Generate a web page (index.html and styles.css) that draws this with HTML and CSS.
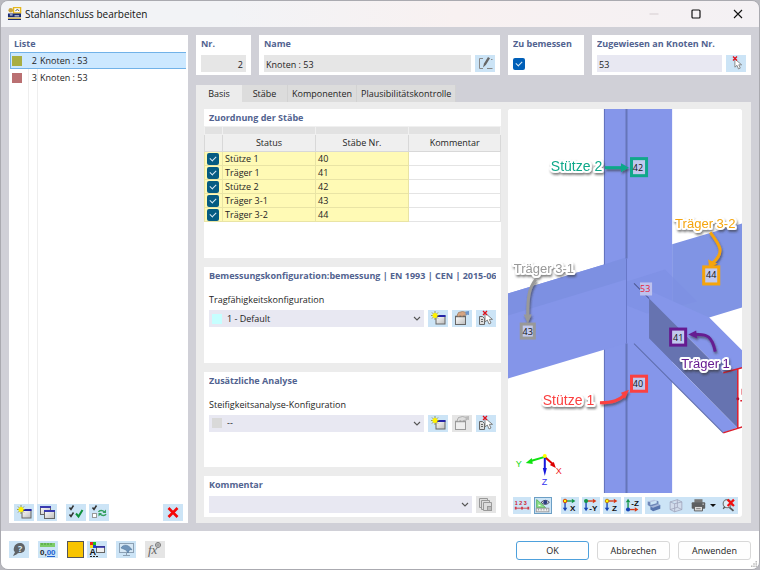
FILE: index.html
```html
<!DOCTYPE html>
<html lang="de">
<head>
<meta charset="utf-8">
<title>Stahlanschluss bearbeiten</title>
<link rel="stylesheet" href="styles.css">
</head>
<body>
<svg class="defs" aria-hidden="true">
  <defs>
    <linearGradient id="paper" x1="0" y1="0" x2="1" y2="1"><stop offset="0" stop-color="#fff"/><stop offset="1" stop-color="#bcbcbc"/></linearGradient>
    <symbol id="i-new" viewBox="0 0 20 17">
      <rect x="8" y="6" width="9" height="8" fill="url(#paper)" stroke="#666"/><path d="M7.500 6h10" stroke="#2525a8" stroke-width="2"/>
      <path d="M7 1v9M3 5.500h8M4 2.500l6 6M10 2.500l-6 6" stroke="#888a30" stroke-width=".8"/><circle cx="7" cy="5.500" r="2.500" fill="#fff200"/>
    </symbol>
    <symbol id="i-copy" viewBox="0 0 20 17">
      <rect x="3.500" y="2.500" width="10" height="8" fill="url(#paper)" stroke="#666"/><path d="M3 3h11" stroke="#3a3ab0" stroke-width="2"/>
      <rect x="7.500" y="6.500" width="10" height="8" fill="url(#paper)" stroke="#666"/><path d="M7 7h11" stroke="#3a3ab0" stroke-width="2"/>
    </symbol>
    <symbol id="i-edit" viewBox="0 0 20 17">
      <rect x="3.500" y="6.500" width="10" height="8" fill="url(#paper)" stroke="#666"/><path d="M3 6.500h11" stroke="#666" stroke-width="1.500"/>
      <path d="M5 5.500L6.500 2.500l4-1 4 1v2.500l-3 .5-1.500 1-1.500-1-2 1z" fill="#d5a583" stroke="#97755b" stroke-width=".7"/><path d="M13.500 1.500l3.500-.5v4l-3.500-.5z" fill="#6c95cb"/>
    </symbol>
    <symbol id="i-edit-off" viewBox="0 0 20 17">
      <rect x="3.500" y="6.500" width="10" height="8" fill="#eee" stroke="#999"/><path d="M3 6.500h11" stroke="#999" stroke-width="1.500"/>
      <path d="M5 5.500L6.500 2.500l4-1 4 1v2.500l-3 .5-1.500 1-1.500-1-2 1z" fill="#ddd" stroke="#999" stroke-width=".7"/><path d="M13.500 1.500l3.500-.5v4l-3.500-.5z" fill="#bbb"/>
    </symbol>
    <symbol id="cursor" viewBox="0 0 10 13"><path d="M1 1v9l2.300-2 1.700 4 2-1-1.700-3.600H8.500z" fill="#fff" stroke="#777" stroke-width=".9"/></symbol>
    <symbol id="i-delpick" viewBox="0 0 20 17">
      <path d="M3.500 6.500h3l2 2v6h-5z" fill="#ddd" stroke="#666"/><path d="M5 9.500h2M5 11.500h2" stroke="#666"/>
      <use href="#cursor" x="8" y="2" width="10" height="13"/><path d="M7 1l4 4M11 1l-4 4" stroke="#e0101c" stroke-width="1.300"/>
    </symbol>
    <symbol id="i-pick" viewBox="0 0 20 17"><use href="#cursor" x="8" y="3" width="9" height="12"/><path d="M7 1.500l4 4M11 1.500l-4 4" stroke="#e0101c" stroke-width="1.300"/></symbol>
    <symbol id="i-rename" viewBox="0 0 20 17"><path d="M8 3.500H4.500v10H8M12 13.500h5.500M16 4.500h1.500" fill="none" stroke="#888"/><path d="M8 12.500l1-4 4-6.500 2 1.200-4 6.500z" fill="#666"/></symbol>
    <symbol id="i-checks" viewBox="0 0 20 17"><path d="M3.500 3.500l1.500 2 2.500-4M3.500 10.500l1.500 2 2.500-4" fill="none" stroke="#333" stroke-width="1.500"/><path d="M10 9.500l2.500 3L16.500 6" fill="none" stroke="#10923c" stroke-width="2"/></symbol>
    <symbol id="i-invert" viewBox="0 0 20 17"><path d="M3.500 3.500l1.500 2 2.500-4" fill="none" stroke="#333" stroke-width="1.500"/><rect x="3.500" y="9.500" width="4" height="4" fill="#fff" stroke="#999"/><path d="M9.500 8c1-2 4-2 6 0M17 10c-1 2-4 2-6 0" fill="none" stroke="#35a060" stroke-width="1.500"/><path d="M17 5.500v3.500h-3.500zM9.500 12.500V9H13z" fill="#35a060"/></symbol>
    <symbol id="i-x" viewBox="0 0 20 17"><path d="M5.500 4l9 9M14.500 4l-9 9" stroke="#f50808" stroke-width="2.600"/></symbol>
    <symbol id="i-pages" viewBox="0 0 20 17"><g fill="#ddd" stroke="#999"><path d="M3.500 2.500h8v9h-8z"/><path d="M5.500 4.500h8v9h-8z"/><path d="M7.500 6.500h8v8h-8z"/></g><rect x="11.500" y="10.500" width="4" height="4" fill="#bbb" stroke="#999"/></symbol>
    <symbol id="i-help" viewBox="0 0 20 17"><path d="M11 2c3.500 0 5 2.500 5 5.500S13.500 12 11 12c-2 0-3 .5-3.500 1.500L4 15l2-4C4.500 10 4.500 8.500 5 6.500 5.800 3.500 8 2 11 2z" fill="#606468"/><text x="9" y="11" class="glyph-help">?</text></symbol>
    <symbol id="i-units" viewBox="0 0 20 17"><rect x="2" y="2" width="15" height="4" fill="#7dcc68"/><path d="M4 2v2M7 2v2M10 2v2M13 2v2" stroke="#4b9a3d"/><text x="2" y="14" class="glyph-units">0,<tspan fill="#2060d0">00</tspan></text><path d="M9 15.500h8" stroke="#2060d0"/></symbol>
    <symbol id="i-style" viewBox="0 0 20 17"><path d="M3 1h3v3H3z" fill="#f02020"/><path d="M6 1h3v3H6z" fill="#20c020"/><path d="M3 4h3v3H3z" fill="#f5e010"/><path d="M6 4h3v3H6z" fill="#2040d0"/><text x="2.500" y="14" class="glyph-a">A</text><path d="M3 15.500h8" stroke="#222" stroke-dasharray="2 1"/><rect x="9.500" y="5.500" width="8" height="6" fill="#eee" stroke="#666"/><path d="M9 6h9" stroke="#2525a8" stroke-width="1.500"/></symbol>
    <symbol id="i-screen" viewBox="0 0 20 17"><rect x="3.500" y="2.500" width="14" height="9" fill="#d5e7f5" stroke="#8ba0b4"/><path d="M10.500 12v2M7 14.500h7" stroke="#8ba0b4"/><path d="M5 7c2-4 8-4 11 2-2-1-3 0-4 3l-2-3c-2-1-3-1-5-2z" fill="#6f94ba" stroke="#456c92" stroke-width=".5"/></symbol>
    <symbol id="i-fx" viewBox="0 0 20 17"><text x="3" y="13" class="glyph-fx">fx</text><circle cx="13" cy="4" r="2.500" fill="none" stroke="#777"/><path d="M10.500 4h5M13 1.500v5" stroke="#777" stroke-width=".7"/></symbol>
    <symbol id="i-num" viewBox="0 0 20 17"><text x="2" y="8" class="glyph-num">1 2 3</text><path d="M3 11.500h14" stroke="#d03a48"/><path d="M2 10h2v3H2zM9 10h2v3H9zM16 10h2v3h-2z" fill="#d03a48"/></symbol>
    <symbol id="i-view" viewBox="0 0 20 17"><path d="M3 2v9h10z" fill="#8fe08a" stroke="#58b058"/><path d="M5 7v2h3z" fill="#fff"/><rect x="2.500" y="11.500" width="14" height="4" fill="#eee" stroke="#999"/><path d="M5 12v2M8 12v2M11 12v2M14 12v2" stroke="#999"/><path d="M8 5q4.500-4.500 9 0-4.500 4.500-9 0z" fill="#fff" stroke="#334"/><circle cx="12.500" cy="5" r="2.200" fill="#2b3d82"/></symbol>
    <symbol id="axes-down" viewBox="0 0 20 17"><path d="M4.500 4v8" stroke="#1746b5" stroke-width="1.500"/><path d="M2 11h5l-2.500 4z" fill="#1746b5"/></symbol>
    <symbol id="i-ax" viewBox="0 0 20 17"><use href="#axes-down" width="20" height="17"/><path d="M5 3.500h7" stroke="#159648" stroke-width="1.500"/><path d="M12 1l4 2.500L12 6z" fill="#159648"/><circle cx="4.500" cy="3.500" r="2" fill="#ff0" stroke="#d33000"/><text x="10" y="15" class="glyph-axis">X</text></symbol>
    <symbol id="i-ay" viewBox="0 0 20 17"><use href="#axes-down" width="20" height="17"/><path d="M5 3.500h7" stroke="#d93814" stroke-width="1.500"/><path d="M12 1l4 2.500L12 6z" fill="#d93814"/><circle cx="4.500" cy="3.500" r="2.300" fill="#159648"/><text x="8" y="15" class="glyph-axis">-Y</text></symbol>
    <symbol id="i-az" viewBox="0 0 20 17"><use href="#axes-down" width="20" height="17"/><path d="M5 3.500h7" stroke="#d93814" stroke-width="1.500"/><path d="M12 1l4 2.500L12 6z" fill="#d93814"/><circle cx="4.500" cy="3.500" r="2" fill="#ff0" stroke="#c07800"/><text x="10" y="15" class="glyph-axis">Z</text></symbol>
    <symbol id="i-anz" viewBox="0 0 20 17"><path d="M4.500 5v8" stroke="#159648" stroke-width="1.500"/><path d="M2 5h5L4.500 1z" fill="#159648"/><path d="M5 13h7" stroke="#d93814" stroke-width="1.500"/><path d="M12 10.500l4 2.500-4 2.500z" fill="#d93814"/><circle cx="4.500" cy="13" r="2.300" fill="#1746b5"/><text x="8" y="9" class="glyph-axis">-Z</text></symbol>
    <symbol id="i-solid" viewBox="0 0 20 17"><path d="M3 4l7-2 3 1-7 2z" fill="#b9c6e2"/><path d="M3 4l3 1v3l7-2V3l2 1v3l-9 3-3-2z" fill="#6f87b8"/><path d="M6 10l8-3 3 1v4l-8 3-3-2z" fill="#5875ae"/><path d="M6 10l8-3 3 1-8 3z" fill="#a9b9dc"/></symbol>
    <symbol id="i-cube" viewBox="0 0 20 17"><path d="M3.500 4.500l5 2v9l-5-2.500zM8.500 6.500l8-2v8.500l-8 2.500M3.500 4.500l8-2.500 5 2.500M11.500 2v8.500l-8 2.500M11.500 10.500l5 2.500" fill="#d5d7e6" fill-opacity=".6" stroke="#9a9fb6" stroke-width=".8"/></symbol>
    <symbol id="i-print" viewBox="0 0 20 17"><path d="M6 1.500h9v4H6z" fill="#777"/><rect x="3" y="5" width="15" height="7" rx="1" fill="#5e6062"/><path d="M6 9.500h9v5H6z" fill="#ddd" stroke="#555"/><path d="M8 12h5" stroke="#777"/><path d="M15 7h1.500" stroke="#fff"/></symbol>
    <symbol id="i-zoomx" viewBox="0 0 20 17"><circle cx="8" cy="6.500" r="4.500" fill="#e0eef7" stroke="#777" stroke-width="1.300"/><path d="M10.500 10.500l4.500 4" stroke="#555" stroke-width="2"/><path d="M3.500 12l2-2" stroke="#555" stroke-width="1.500"/><path d="M8.500 2l7 7M15.500 2l-7 7" stroke="#f01010" stroke-width="2.500"/></symbol>
    <symbol id="chev" viewBox="0 0 8 5"><path d="M1 1l3 3 3-3" fill="none" stroke="#555" stroke-width="1.100"/></symbol>
  </defs>
</svg>

<div class="window">
  <header class="titlebar">
    <svg class="app-icon" viewBox="0 0 16 15" aria-hidden="true"><path d="M7 .5h7.500v6H7z" fill="#fff" stroke="#e5b71c" stroke-width="1.500"/><path d="M9 4q2-2.500 4 0" stroke="#345" fill="none"/><circle cx="4" cy="3.500" r="2.500" fill="#caa43a"/><path d="M1 7h14v4H1zM1 12.500h14V14H1z" fill="#182a72"/><path d="M3 8.500h3M8 9.500h5" stroke="#fff"/><path d="M1 12h14" stroke="#e5b71c"/></svg>
    <h1>Stahlanschluss bearbeiten</h1>
    <div class="window-buttons">
      <button aria-label="Minimieren" disabled><svg viewBox="0 0 10 10"><path d="M.5 5h9" stroke="#d5cdd0"/></svg></button>
      <button aria-label="Maximieren"><svg viewBox="0 0 10 10"><rect x="1" y="1" width="8" height="8" rx="1" fill="none" stroke="#111" stroke-width="1.200"/></svg></button>
      <button aria-label="Schließen"><svg viewBox="0 0 10 10"><path d="M1 1l8 8M9 1L1 9" stroke="#111" stroke-width="1.100"/></svg></button>
    </div>
  </header>

  <main class="content">
    <section class="card list">
      <h2>Liste</h2>
      <ul class="rows">
        <li><button class="row selected"><span class="swatch olive"></span><span class="no">2</span><span class="label">Knoten : 53</span></button></li>
        <li><button class="row"><span class="swatch rose"></span><span class="no">3</span><span class="label">Knoten : 53</span></button></li>
      </ul>
      <div class="list-tools">
        <button class="tool" aria-label="Neu"><svg><use href="#i-new"/></svg></button>
        <button class="tool" aria-label="Kopieren"><svg><use href="#i-copy"/></svg></button>
        <button class="tool spaced" aria-label="Alle auswählen"><svg><use href="#i-checks"/></svg></button>
        <button class="tool" aria-label="Auswahl umkehren"><svg><use href="#i-invert"/></svg></button>
        <button class="tool last" aria-label="Löschen"><svg><use href="#i-x"/></svg></button>
      </div>
    </section>

    <div class="details">
      <div class="fields">
        <section class="card"><h2><label for="nr">Nr.</label></h2><div class="line"><input id="nr" class="field gray number" value="2" readonly></div></section>
        <section class="card"><h2><label for="name">Name</label></h2><div class="line"><input id="name" class="field gray" value="Knoten : 53" readonly><button class="tool" aria-label="Namen bearbeiten"><svg><use href="#i-rename"/></svg></button></div></section>
        <section class="card"><h2><label for="design">Zu bemessen</label></h2><div class="line"><input id="design" class="check" type="checkbox" checked></div></section>
        <section class="card"><h2><label for="nodes">Zugewiesen an Knoten Nr.</label></h2><div class="line"><input id="nodes" class="field" value="53"><button class="tool" aria-label="Knoten wählen"><svg><use href="#i-pick"/></svg></button></div></section>
      </div>

      <nav class="tabs">
        <button class="tab active">Basis</button><button class="tab">Stäbe</button><button class="tab">Komponenten</button><button class="tab">Plausibilitätskontrolle</button>
      </nav>

      <div class="page">
        <div class="settings">
          <section class="card members">
            <h2>Zuordnung der Stäbe</h2>
            <table>
              <colgroup><col class="c-check"><col class="c-status"><col class="c-no"><col></colgroup>
              <thead>
                <tr class="band"><td></td><td></td><td></td><td></td></tr>
                <tr><th></th><th>Status</th><th>Stäbe Nr.</th><th>Kommentar</th></tr>
              </thead>
              <tbody>
                <tr><td><input class="check" type="checkbox" checked aria-label="Stütze 1"></td><td>Stütze 1</td><td>40</td><td></td></tr>
                <tr><td><input class="check" type="checkbox" checked aria-label="Träger 1"></td><td>Träger 1</td><td>41</td><td></td></tr>
                <tr><td><input class="check" type="checkbox" checked aria-label="Stütze 2"></td><td>Stütze 2</td><td>42</td><td></td></tr>
                <tr><td><input class="check" type="checkbox" checked aria-label="Träger 3-1"></td><td>Träger 3-1</td><td>43</td><td></td></tr>
                <tr><td><input class="check" type="checkbox" checked aria-label="Träger 3-2"></td><td>Träger 3-2</td><td>44</td><td></td></tr>
              </tbody>
            </table>
          </section>

          <section class="card config">
            <h2>Bemessungskonfiguration:bemessung | EN 1993 | CEN | 2015-06</h2>
            <label class="caption" for="uls">Tragfähigkeitskonfiguration</label>
            <div class="line">
              <div class="combo"><span class="swatch cyan"></span><select id="uls"><option>1 - Default</option></select><svg class="chev"><use href="#chev"/></svg></div>
              <button class="tool" aria-label="Neu"><svg><use href="#i-new"/></svg></button>
              <button class="tool" aria-label="Bearbeiten"><svg><use href="#i-edit"/></svg></button>
              <button class="tool" aria-label="Auswählen"><svg><use href="#i-delpick"/></svg></button>
            </div>
          </section>

          <section class="card config">
            <h2>Zusätzliche Analyse</h2>
            <label class="caption" for="stiff">Steifigkeitsanalyse-Konfiguration</label>
            <div class="line">
              <div class="combo"><span class="swatch silver"></span><select id="stiff"><option>--</option></select><svg class="chev"><use href="#chev"/></svg></div>
              <button class="tool" aria-label="Neu"><svg><use href="#i-new"/></svg></button>
              <button class="tool off" aria-label="Bearbeiten" disabled><svg><use href="#i-edit-off"/></svg></button>
              <button class="tool" aria-label="Auswählen"><svg><use href="#i-delpick"/></svg></button>
            </div>
          </section>

          <section class="card note">
            <h2><label for="comment">Kommentar</label></h2>
            <div class="line">
              <div class="combo"><select id="comment"><option></option></select><svg class="chev"><use href="#chev"/></svg></div>
              <button class="tool off" aria-label="Kommentare" disabled><svg><use href="#i-pages"/></svg></button>
            </div>
          </section>
        </div>

        <section class="viewer">
          <svg class="scene" viewBox="0 0 234 383" preserveAspectRatio="xMidYMid slice">
            <defs>
              <filter id="halo" x="-20%" y="-40%" width="140%" height="190%"><feDropShadow dx="1" dy="2" stdDeviation="1" flood-color="#333" flood-opacity=".6"/></filter>
            </defs>
            <rect width="234" height="383" fill="#fff"/>
            <path d="M164 135l70-21v84l-33 10-37 30z" fill="#8094e4"/>
            <path d="M96 0h68v383H96z" fill="#8596ea"/>
            <path d="M0 184l96-29 22-7v86l-22 6-96 29z" fill="#8495e9"/>
            <path d="M0 184l96-29 22-7v22L0 206z" fill="#7d90e2"/>
            <path d="M119 172l38-12 32 32-50 12-20-8z" fill="#7d90e2" opacity=".6"/>
            <path d="M96.500 0v155M96.500 240v143" stroke="#6272bd"/>
            <path d="M118.500 0v149M118.500 234v149" stroke="#6575b9" stroke-width="2"/>
            <path d="M118.500 149v85" stroke="#6878c8"/>
            <path d="M137 185l4-4 60 27 33 33v17l-19 5z" fill="#8596ea"/>
            <path d="M141 189l74 74 14-4v59l-88-89z" fill="#6673b0"/>
            <path d="M126 234l15-5 88 89-14 5z" fill="#8596ea"/>
            <path d="M126 234l89 89" stroke="#5d6cac"/><path d="M126 174l15 15" stroke="#4c568f"/>
            <path d="M215 263l19-5M215 323l19-6M229.500 259v59M234 279v6M232 291h2" fill="none" stroke="#db1d2d" stroke-width="1.500"/><circle cx="229.500" cy="289" r="1.500" fill="#b01030"/>
            <rect x="132" y="173" width="12" height="13" fill="#bdc2ee"/><text x="132" y="183" class="node">53</text>

            <g class="callout green" filter="url(#halo)"><text x="43" y="62" class="large">Stütze 2</text><path d="M97 58.500h18" class="arrow"/><path d="M113 54l8 4.500-8 4.500z" class="head"/></g>
            <g class="callout orange" filter="url(#halo)"><text x="167" y="119">Träger 3-2</text><path d="M202 123c10 13 15 20 2 31" class="arrow"/><path d="M200 150l1 9 8-5z" class="head"/></g>
            <g class="callout gray" filter="url(#halo)"><text x="6" y="164">Träger 3-1</text><path d="M28 170c-7 9-8 18-8 36" class="arrow"/><path d="M16 205h8l-4 9z" class="head"/></g>
            <g class="callout purple" filter="url(#halo)"><text x="173" y="258">Träger 1</text><path d="M207 242c-3-15-8-18-20-17" class="arrow"/><path d="M188 221l-8 4 9 4z" class="head"/></g>
            <g class="callout red" filter="url(#halo)"><text x="35" y="295" class="large">Stütze 1</text><path d="M92 293c14 0 19-3 24-7" class="arrow"/><path d="M113 283l8-3-4 9z" class="head"/></g>

            <g class="tag"><rect x="123.500" y="49.500" width="15" height="17" stroke="#10a88a"/><text x="130" y="62">42</text></g>
            <g class="tag"><rect x="195.500" y="157.500" width="15" height="17" stroke="#f5a40c"/><text x="203" y="169">44</text></g>
            <g class="tag"><rect x="13.500" y="214.500" width="13" height="14" stroke="#999"/><text x="20" y="225">43</text></g>
            <g class="tag"><rect x="162.500" y="219.500" width="15" height="16" stroke="#661b91"/><text x="170" y="231">41</text></g>
            <g class="tag"><rect x="123.500" y="266.500" width="15" height="15" stroke="#fb4141"/><text x="130" y="277">40</text></g>

            <g class="axes"><path d="M37 347l-14 4" stroke="#10e210"/><path d="M24 348l-6 5 7 1z" fill="#10e210"/><path d="M37 347l8 7" stroke="#d00"/><path d="M42 355l6 3-2-6z" fill="#d00"/><path d="M37 347v12" stroke="#1616dd"/><path d="M35 358h4l-2 8z" fill="#1616dd"/><circle cx="37" cy="346" r="2" fill="#ff0"/><text x="8" y="357" fill="#10d810">Y</text><text x="48" y="364" fill="#e22">X</text><text x="34" y="375" fill="#33e">Z</text></g>
          </svg>
          <div class="view-tools">
            <button class="tool" aria-label="Nummerierung"><svg><use href="#i-num"/></svg></button>
            <button class="tool pressed" aria-label="Anzeige"><svg><use href="#i-view"/></svg></button>
            <button class="tool spaced" aria-label="Ansicht X"><svg><use href="#i-ax"/></svg></button>
            <button class="tool" aria-label="Ansicht -Y"><svg><use href="#i-ay"/></svg></button>
            <button class="tool" aria-label="Ansicht Z"><svg><use href="#i-az"/></svg></button>
            <button class="tool" aria-label="Ansicht -Z"><svg><use href="#i-anz"/></svg></button>
            <div class="joined">
              <button class="tool" aria-label="Volumen"><svg><use href="#i-solid"/></svg></button>
              <button class="tool" aria-label="Drahtmodell"><svg><use href="#i-cube"/></svg></button>
              <button class="tool print" aria-label="Drucken"><svg><use href="#i-print"/></svg><span class="arrow-down"></span></button>
              <button class="tool" aria-label="Zoom zurücksetzen"><svg><use href="#i-zoomx"/></svg></button>
            </div>
          </div>
        </section>
      </div>
    </div>
  </main>

  <footer class="footer">
    <div class="footer-tools">
      <button class="tool" aria-label="Hilfe"><svg><use href="#i-help"/></svg></button>
      <button class="tool" aria-label="Einheiten"><svg><use href="#i-units"/></svg></button>
      <button class="tool color" aria-label="Farbe"></button>
      <button class="tool tight" aria-label="Darstellung"><svg><use href="#i-style"/></svg></button>
      <button class="tool" aria-label="Grafik"><svg><use href="#i-screen"/></svg></button>
      <button class="tool off" aria-label="Formel" disabled><svg><use href="#i-fx"/></svg></button>
    </div>
    <div class="actions"><button class="action primary">OK</button><button class="action">Abbrechen</button><button class="action">Anwenden</button></div>
    <svg class="grip" viewBox="0 0 8 8" aria-hidden="true"><path d="M6 0h2v2H6zM3 3h2v2H3zM6 3h2v2H6zM0 6h2v2H0zM3 6h2v2H3zM6 6h2v2H6z" fill="#bbb"/></svg>
  </footer>
</div>
</body>
</html>
```
FILE: styles.css
```css
* { box-sizing: border-box; }
body { margin: 0; background: #b9b9bf; color: #242424; font: 9px/12px "Open Sans", "Noto Sans", sans-serif; }
button, input, select { margin: 0; padding: 0; border: 0; border-radius: 0; font: inherit; color: inherit; }
h1, h2, ul { margin: 0; padding: 0; }
.defs { position: absolute; width: 0; height: 0; }

.window { display: flex; flex-direction: column; min-height: 100vh; border: 1px solid #aaaab0; border-radius: 8px; background: #d0d0d7; overflow: hidden; }
.titlebar { display: flex; align-items: center; height: 26px; padding-left: 6px; gap: 3px; background: linear-gradient(90deg, #f2f3f6 30%, #f8f1f1 60%, #f4f1f4); }
.app-icon { width: 15px; height: 14px; }
h1 { font-size: 10px; font-weight: 400; line-height: 14px; color: #111; }
.window-buttons { display: flex; margin-left: auto; }
.window-buttons button { display: grid; place-items: center; width: 42px; height: 26px; background: none; }
.window-buttons svg { width: 10px; height: 10px; }

.content { flex: 1; display: grid; grid-template-columns: 179px minmax(0, 1fr); gap: 8px; padding: 8px; }
.card { padding: 3px 5px; background: #fff; }
h2 { overflow: hidden; font-size: 9px; line-height: 12px; font-weight: 700; color: #526390; white-space: nowrap; }
.line { display: flex; align-items: center; gap: 4px; }
.field { flex: 1; min-width: 0; height: 17px; padding: 1px 2px 0; background: #e8e8f2; }
.field.gray { background: #e6e6e6; }
.number { text-align: right; padding-right: 3px; }
.tool { display: flex; flex: none; width: 20px; height: 17px; background: #cce4f6; }
.tool svg { width: 20px; height: 17px; }
.tool.off { background: #e5e5e5; }
.tool.pressed { outline: 1px solid #6c9fc5; outline-offset: -1px; }
.check { appearance: none; width: 12px; height: 12px; border-radius: 2px; background: #005fb8; display: grid; place-items: center; }
.check::after { content: ""; width: 5px; height: 3px; margin-top: -2px; border: solid #d7e8f4; border-width: 0 0 1px 1px; transform: rotate(-45deg); }

.list { display: flex; flex-direction: column; padding: 3px 2px 2px 1px; }
.list h2 { padding-left: 4px; }
.rows { flex: 1; margin-top: 2px; list-style: none; background: linear-gradient(90deg, transparent 18px, #eee 18px 19px, transparent 19px 27px, #eee 27px 28px, transparent 28px); }
.row { display: grid; grid-template-columns: 17px 8px 1fr; align-items: center; width: 100%; height: 17px; padding: 1px 2px 0; background: none; text-align: left; }
.row .no { text-align: right; }
.row .label { padding-left: 3px; }
.row.selected { background: #cce8ff; border: solid #71b2e8; border-width: 1px 0 1px 1px; padding: 0 2px 0 1px; }
.swatch { width: 10px; height: 10px; }
.olive { background: #a9ae42; }
.rose { background: #ba7072; }
.cyan { background: #c6ffff; }
.silver { background: #d9d9d9; }
.list-tools { display: flex; gap: 3px; padding: 0 3px 0 4px; }
.list-tools .spaced { margin-left: 6px; }
.list-tools .last { margin-left: auto; }

.details { display: flex; flex-direction: column; min-width: 0; }
.fields { display: grid; grid-template-columns: 55px minmax(0, 1fr) 76px 159px; gap: 8px; height: 40px; }
.fields .card { padding-top: 3px; }
.fields .line { height: 17px; margin-top: 5px; }
.tabs { display: flex; margin-top: 10px; height: 17px; }
.tab { padding: 1px 4px 0; background: #dcdcdc; border-right: 1px solid #d2d2d2; white-space: nowrap; }
.tab:nth-child(-n+2) { min-width: 46px; }
.tab.active { background: #ececec; border: 0; }
.page { flex: 1; display: grid; grid-template-columns: minmax(0, 297fr) minmax(0, 234fr); gap: 7px; padding: 7px 9px 6px 8px; background: #ececec; }
.settings { display: grid; grid-template-rows: 150fr 96fr 96fr 41px; gap: 9px; }
.members { padding: 3px 0; }
.members h2 { padding: 0 5px; }
table { width: 100%; margin-top: 2px; border-collapse: collapse; table-layout: fixed; }
.c-check { width: 18px; }
.c-status, .c-no { width: 93px; }
td, th { padding: 0 2px; border: 1px solid #e4e4e4; font-weight: 400; }
.band td { height: 8px; background: #e2e2e2; border-color: #f0f0f0; }
th { height: 17px; background: #efefef; border-color: #d8d8d8; text-align: center; }
tbody td { height: 14px; padding: 1px 2px 0; line-height: 12px; }
tbody td:not(:last-child) { background: #fffab5; border-color: #e9e4a5; }
tbody td:first-child { padding: 0 2px; }
tbody .check { background: #055b82; margin: 0; }
.config, .note { padding-top: 3px; }
.caption { display: block; margin: 12px 0 4px; line-height: 12px; }
.note .line { margin-top: 5px; }
.combo { position: relative; display: flex; flex: 1; min-width: 0; align-items: center; gap: 3px; height: 17px; padding-left: 3px; background: #e8e8f2; }
.combo select { flex: 1; min-width: 0; height: 17px; padding-left: 2px; appearance: none; background: none; }
.chev { position: absolute; right: 3px; width: 8px; height: 5px; pointer-events: none; }

.viewer { display: flex; flex-direction: column; border-radius: 3px; background: #fff; overflow: hidden; }
.scene { display: block; flex: 1; width: 100%; min-height: 0; }
.scene text { font: 9px "Open Sans", sans-serif; }
.scene .node { fill: #e51d3b; }
.scene .tag rect { fill: #c1c9ee; stroke-width: 3px; }
.scene .tag text { fill: #111; text-anchor: middle; }
.scene .axes path { stroke-width: 2px; }
.scene .axes path[fill] { stroke: none; }
.scene .axes text { font: 9px "Liberation Sans", sans-serif; }
.scene .callout text { font: 13px "Liberation Sans", sans-serif; stroke: #fff; stroke-width: 4px; stroke-linejoin: round; paint-order: stroke; fill: var(--ink); }
.scene .callout text.large { font-size: 14px; }
.arrow { fill: none; stroke: var(--ink); stroke-width: 3px; }
.head { fill: var(--ink); }
.green { --ink: #10a88a; }
.orange { --ink: #f5a40c; }
.callout.gray { --ink: #999; }
.purple { --ink: #661b91; }
.red { --ink: #fb4141; }
.view-tools { display: flex; gap: 3px; height: 24px; padding: 4px 4px 3px 5px; }
.view-tools .tool { width: 18px; justify-content: center; }
.view-tools .tool svg { width: 18px; }
.view-tools > .spaced { margin-left: 6px; }
.joined { display: flex; flex: 1; justify-content: space-between; background: #cce4f6; }
.joined .print { width: 28px; align-items: center; gap: 3px; }
.arrow-down { border: solid transparent; border-width: 3px 3px 0; border-top-color: #111; }

.footer { position: relative; display: flex; align-items: center; height: 38px; padding: 0 8px; background: #fff; }
.footer-tools { display: flex; gap: 9px; margin-bottom: 2px; }
.footer-tools .color { width: 17px; background: #f8c400; border: 1px solid #555; }
.footer-tools .tight { margin-left: -6px; }
.actions { display: flex; gap: 8px; margin-left: auto; }
.action { width: 73px; height: 19px; padding-top: 1px; border: 1px solid #d8d8d8; border-radius: 3px; background: #fefefe; }
.action.primary { border-color: #4da0dc; }
.grip { position: absolute; right: 2px; bottom: 2px; width: 6px; height: 6px; }

.glyph-help { font: bold 9px "Open Sans", sans-serif; fill: #d9ebf7; }
.glyph-units { font: bold 8px "Liberation Sans", sans-serif; fill: #222; }
.glyph-a { font: bold 9px "Liberation Sans", sans-serif; fill: #111; }
.glyph-fx { font: italic 13px "Liberation Serif", serif; fill: #666; }
.glyph-num { font: bold 6px "Liberation Sans", sans-serif; fill: #d02030; }
.glyph-axis { font: bold 9px "Liberation Sans", sans-serif; fill: #111; }
```
